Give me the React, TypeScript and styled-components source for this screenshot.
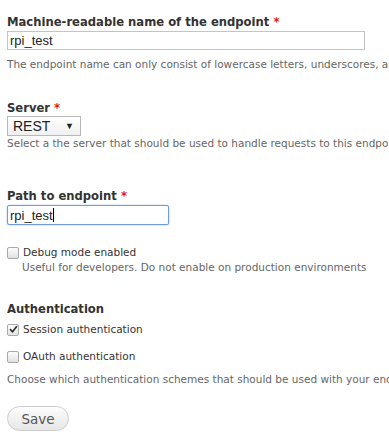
import styled, { createGlobalStyle } from 'styled-components';

const GlobalStyle = createGlobalStyle`
  html, body {
    margin: 0;
    padding: 0;
    background: #fff;
  }
  body {
    font-family: 'DejaVu Sans', Verdana, sans-serif;
    color: #333;
    overflow: hidden;
  }
`;

function Check({ checked }: { checked?: boolean }) {
  return (
    <Box $checked={checked}>
      {checked && (
        <svg width="9" height="9" viewBox="0 0 9 9">
          <path
            d="M1.5 4.6 L3.6 6.8 L7.6 1.6"
            fill="none"
            stroke="#333"
            strokeWidth="1.7"
            strokeLinecap="round"
            strokeLinejoin="round"
          />
        </svg>
      )}
    </Box>
  );
}

export default function App() {
  return (
    <>
      <GlobalStyle />
      <Form>
        <Item>
          <Label>
            Machine-readable name of the endpoint <Req>*</Req>
          </Label>
          <TextInput $width={358}>rpi_test</TextInput>
          <Desc $top={7}>
            The endpoint name can only consist of lowercase letters, underscores, and numbers.
          </Desc>
        </Item>

        <Item $top={29}>
          <Label>
            Server <Req>*</Req>
          </Label>
          <Select>
            <span>REST</span>
            <Arrow>▼</Arrow>
          </Select>
          <Desc>Select a the server that should be used to handle requests to this endpoint.</Desc>
        </Item>

        <Item $top={38}>
          <Label>
            Path to endpoint <Req>*</Req>
          </Label>
          <TextInput $width={162} $focused>
            rpi_test<Caret />
          </TextInput>
        </Item>

        <Item $top={20}>
          <CheckRow>
            <Check />
            Debug mode enabled
          </CheckRow>
          <Desc $indent>Useful for developers. Do not enable on production environments</Desc>
        </Item>

        <Item $top={27}>
          <Heading>Authentication</Heading>
          <CheckRow $top={5}>
            <Check checked />
            Session authentication
          </CheckRow>
          <CheckRow $top={12}>
            <Check />
            OAuth authentication
          </CheckRow>
          <Desc $top={8}>
            Choose which authentication schemes that should be used with your endpoint.
          </Desc>
        </Item>

        <Actions>
          <Button>Save</Button>
        </Actions>
      </Form>
    </>
  );
}

const Form = styled.div`
  padding: 14px 0 0 7px;
  width: 382px;
  overflow: hidden;
`;

const Item = styled.div<{ $top?: number }>`
  margin-top: ${(p) => p.$top ?? 0}px;
`;

const Label = styled.div`
  font-size: 11.6px;
  font-weight: bold;
  line-height: 16px;
  color: #333;
  white-space: nowrap;
`;

const Heading = styled(Label)``;

const Req = styled.span`
  color: #e2180e;
`;

const TextInput = styled.div<{ $width: number; $focused?: boolean }>`
  box-sizing: border-box;
  display: flex;
  align-items: center;
  margin-top: 1px;
  width: ${(p) => p.$width}px;
  height: ${(p) => (p.$focused ? 20 : 19)}px;
  padding: 0 2px;
  font-family: 'Liberation Sans', Arial, sans-serif;
  font-size: 13px;
  color: #222;
  background: #fff;
  border: 1px solid ${(p) => (p.$focused ? '#6d9de0' : '#c4c4c4')};
  box-shadow: ${(p) => (p.$focused ? '0 0 2px #9cc0f0' : 'none')};
  border-radius: ${(p) => (p.$focused ? 2 : 0)}px;
`;

const Caret = styled.span`
  display: inline-block;
  width: 1px;
  height: 14px;
  background: #000;
`;

const Select = styled.div`
  box-sizing: border-box;
  display: flex;
  align-items: center;
  justify-content: space-between;
  width: 74px;
  height: 20px;
  padding: 0 6px 0 5px;
  font-family: 'Liberation Sans', Arial, sans-serif;
  font-size: 14px;
  color: #222;
  border: 1px solid #b8b8b8;
  background: linear-gradient(#fff, #f0f0f0);
`;

const Arrow = styled.span`
  font-size: 9px;
  color: #222;
`;

const Desc = styled.div<{ $top?: number; $indent?: boolean }>`
  margin-top: ${(p) => p.$top ?? 0}px;
  padding-left: ${(p) => (p.$indent ? 15 : 0)}px;
  font-size: 10.5px;
  line-height: 14px;
  color: #666;
  white-space: nowrap;
`;

const CheckRow = styled.div<{ $top?: number }>`
  display: flex;
  align-items: center;
  gap: 4px;
  margin-top: ${(p) => p.$top ?? 0}px;
  font-size: 10.5px;
  line-height: 15px;
  color: #333;
`;

const Box = styled.span<{ $checked?: boolean }>`
  box-sizing: border-box;
  display: inline-flex;
  align-items: center;
  justify-content: center;
  width: 12px;
  height: 12px;
  border: 1px solid #a9a9a9;
  border-radius: 2px;
  background: linear-gradient(#fcfcfc, #e2e2e2);
`;

const Actions = styled.div`
  margin-top: 20px;
`;

const Button = styled.div`
  box-sizing: border-box;
  display: inline-flex;
  align-items: center;
  justify-content: center;
  width: 62px;
  height: 25px;
  font-size: 13.5px;
  color: #555;
  border: 1px solid #cdcdcd;
  border-radius: 13px;
  background: linear-gradient(#fdfdfd, #e6e6e6);
`;
